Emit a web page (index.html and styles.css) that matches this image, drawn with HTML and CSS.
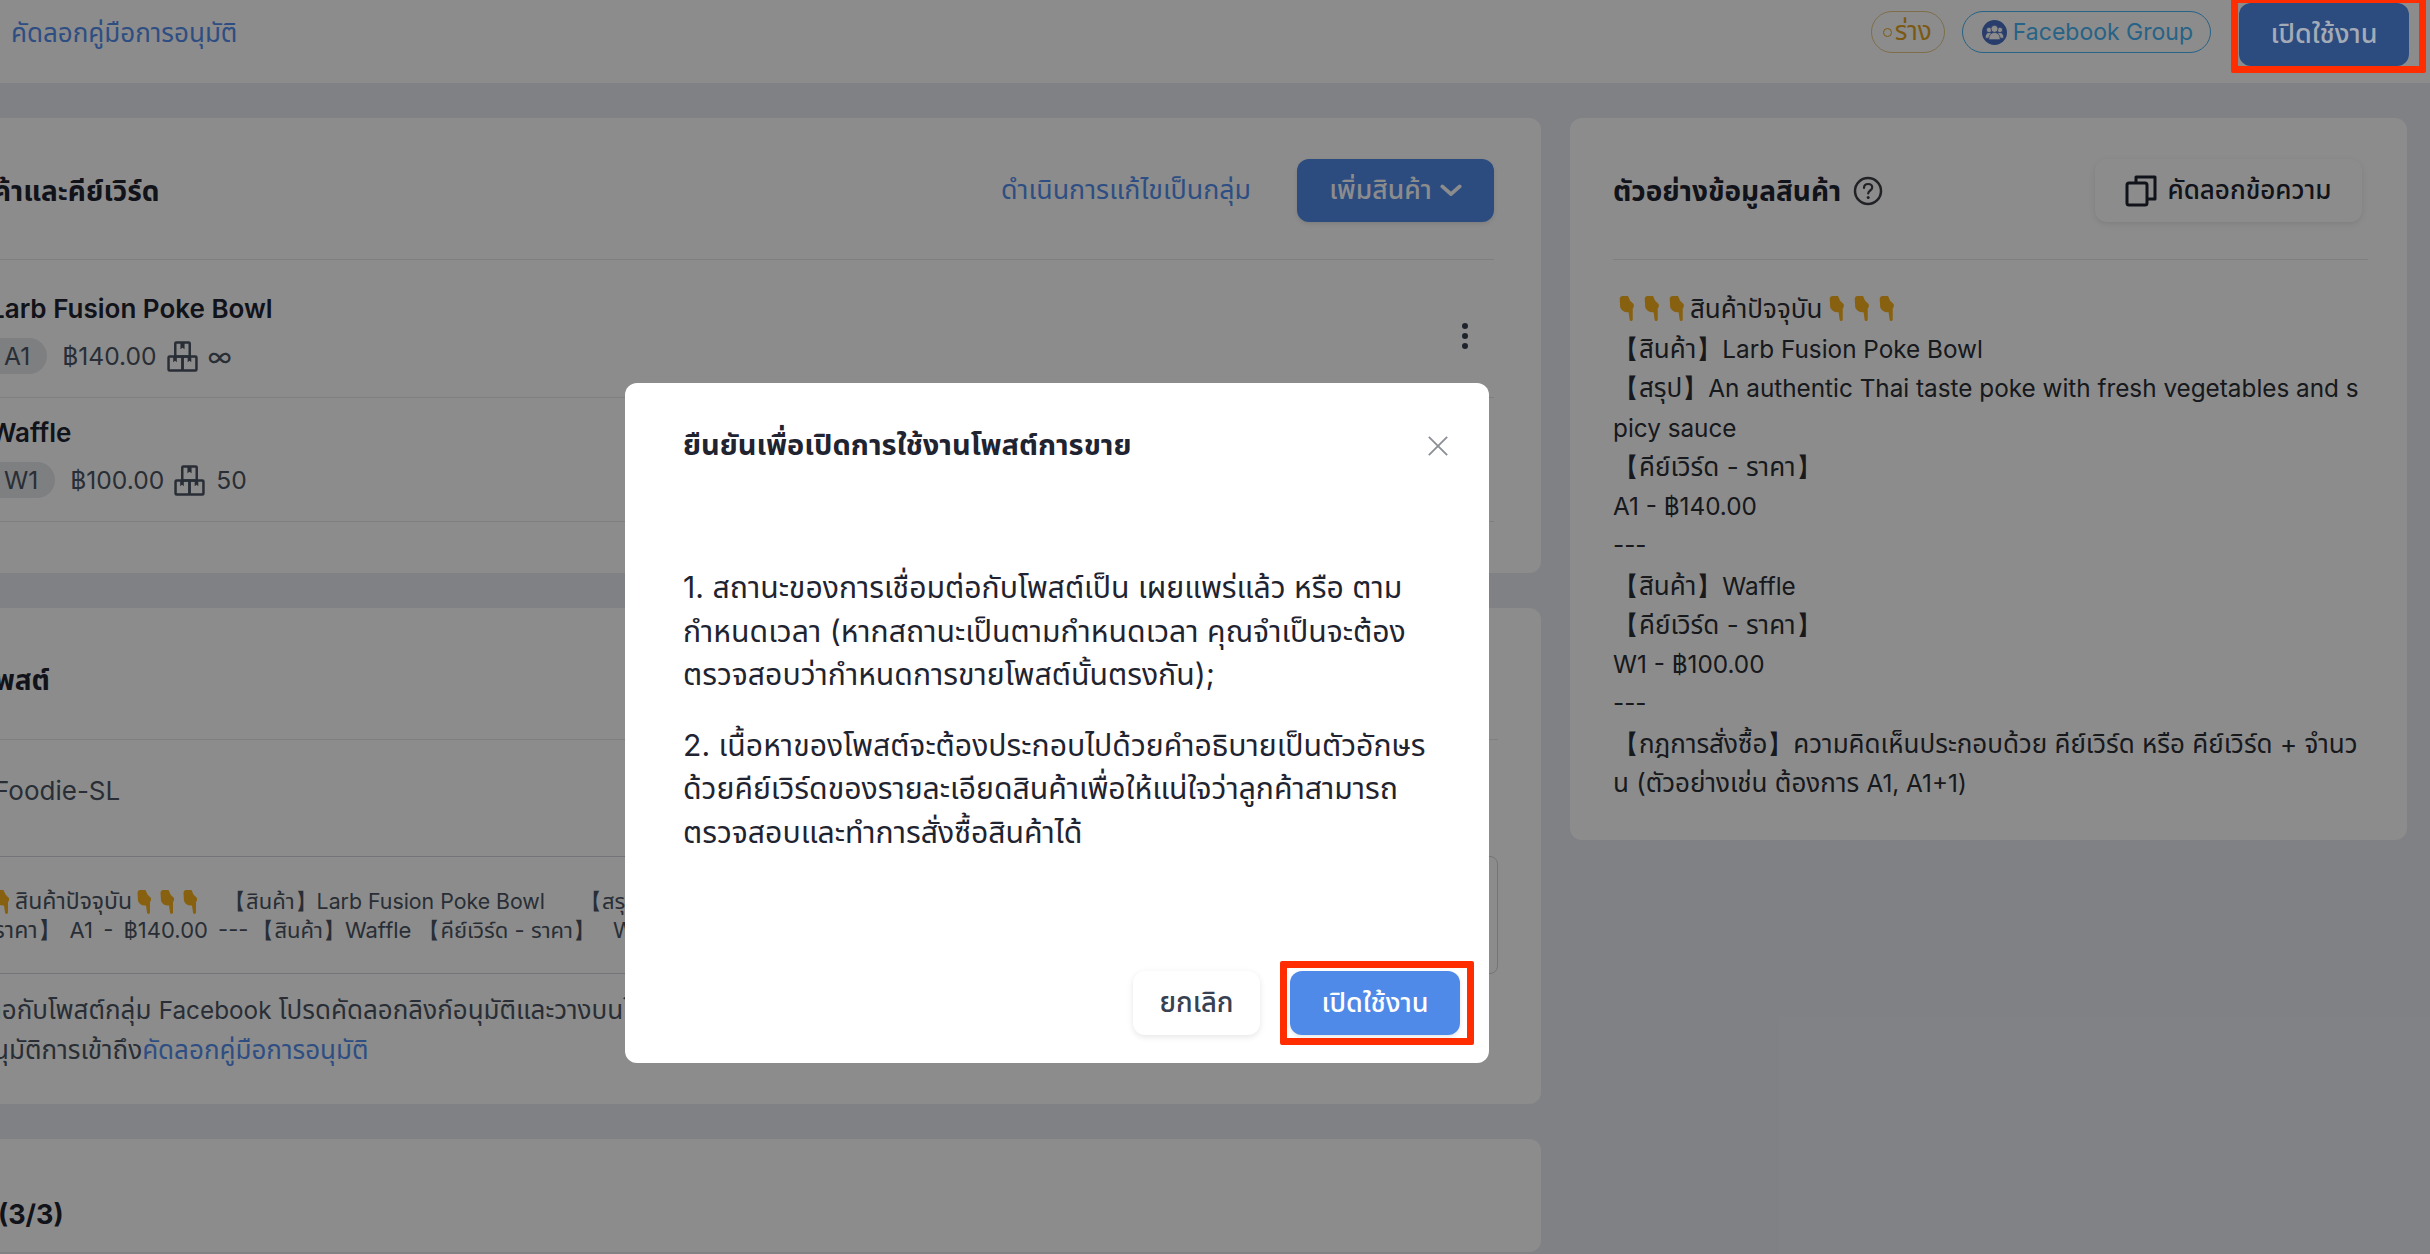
FILE: index.html
```html
<!DOCTYPE html>
<html lang="th">
<head>
<meta charset="utf-8">
<title>Post</title>
<link rel="stylesheet" href="styles.css">
</head>
<body>
<svg class="defs" width="0" height="0" aria-hidden="true"><defs>
  <symbol id="hand" viewBox="0 0 16 24"><path d="M1 3c0-1.500 1-3 2.500-3H9l2 4.500 3.500 3.500v2.500L13.500 12v10.500c0 1.900-3 1.900-3 0L9.500 15.500C6 16 3 14.500 1.500 11z" fill="#f6b01e"/></symbol>
  <symbol id="boxes" viewBox="0 0 30 30"><g fill="none" stroke="currentColor" stroke-width="2.400" stroke-linejoin="round"><rect x="8" y="1.500" width="14" height="13.500" rx="1"/><rect x="1.500" y="15" width="13.500" height="13.500" rx="1"/><rect x="15" y="15" width="13.500" height="13.500" rx="1"/></g><path d="M13 2h4v6l-2-1.500L13 8zM6 15h3.500v5.500l-1.700-1.300L6 20.500zM20 15h3.500v5.500l-1.700-1.300L20 20.500z" fill="currentColor"/></symbol>
</defs></svg>

<div class="app">
  <header class="topbar">
    <a class="link guide-top">คัดลอกคู่มือการอนุมัติ</a>
    <div class="top-actions">
      <span class="pill pill-draft"><i class="dot"></i>ร่าง</span>
      <span class="pill pill-fb">
        <svg class="fb-icon" viewBox="0 0 24 24"><circle cx="12" cy="12" r="12" fill="#4a6fc4"/><g fill="#fff" stroke="#4a6fc4" stroke-width=".8"><circle cx="6.800" cy="9.500" r="2.600"/><circle cx="17.200" cy="9.500" r="2.600"/><path d="M3 17.500c0-3.500 1.500-5.500 3.800-5.500s3.800 2 3.800 5.500zM13.400 17.500c0-3.500 1.500-5.500 3.800-5.500s3.800 2 3.800 5.500z"/><circle cx="12" cy="8.500" r="3.400"/><path d="M6.500 19c0-4.500 2.200-7 5.500-7s5.500 2.500 5.500 7z"/></g></svg>
        Facebook Group
      </span>
      <div class="annot annot-top"><button class="btn btn-top">เปิดใช้งาน</button></div>
    </div>
  </header>

  <main class="content">
    <div class="col-left">
      <section class="card card-products">
        <div class="card-head">
          <h2 class="title title-products">สินค้าและคีย์เวิร์ด</h2>
          <div class="head-actions">
            <a class="link link-bulk">ดำเนินการแก้ไขเป็นกลุ่ม</a>
            <button class="btn btn-primary btn-add">เพิ่มสินค้า
              <svg class="chev" viewBox="0 0 24 14"><path d="M2.500 2.500 12 11l9.500-8.500" fill="none" stroke="currentColor" stroke-width="4" stroke-linecap="round" stroke-linejoin="round"/></svg>
            </button>
          </div>
        </div>
        <div class="product product-first">
          <div class="product-name">Larb Fusion Poke Bowl</div>
          <div class="product-sub">
            <span class="chip">A1</span><span>฿140.00</span>
            <svg class="box"><use href="#boxes"/></svg>
            <span class="inf">∞</span>
          </div>
          <svg class="more" viewBox="0 0 8 28"><circle cx="4" cy="4" r="3"/><circle cx="4" cy="14" r="3"/><circle cx="4" cy="24" r="3"/></svg>
        </div>
        <div class="product">
          <div class="product-name">Waffle</div>
          <div class="product-sub">
            <span class="chip">W1</span><span>฿100.00</span>
            <svg class="box"><use href="#boxes"/></svg>
            <span>50</span>
          </div>
        </div>
      </section>

      <section class="card card-post">
        <div class="card-head head-post">
          <h2 class="title title-post">โพสต์</h2>
        </div>
        <div class="post-page">Foodie-SL</div>
        <div class="post-text">
          <div class="post-line line-1"><span class="hands"><svg class="hand"><use href="#hand"/></svg><svg class="hand"><use href="#hand"/></svg></span><span class="th-run">สินค้าปัจจุบัน</span><span class="hands hands-after"><svg class="hand"><use href="#hand"/></svg><svg class="hand"><use href="#hand"/></svg><svg class="hand"><use href="#hand"/></svg></span><span class="run-1">【สินค้า】<span class="run-latin">Larb Fusion Poke Bowl</span></span><span class="run-2">【สรุป】An authentic Thai taste poke</span></div>
          <div class="post-line line-2"><span class="th-run">【คีย์เวิร์ด - ราคา】</span><span class="run-price">A1 - ฿140.00 ---</span><span class="run-3">【สินค้า】Waffle</span><span class="run-4">【คีย์เวิร์ด - ราคา】</span><span class="run-5">W1 - ฿100.00</span></div>
        </div>
        <p class="post-note note-1">หากต้องการเชื่อมต่อกับโพสต์กลุ่ม <span class="en">Facebook</span> โปรดคัดลอกลิงก์อนุมัติและวางบนโพสต์</p>
        <p class="post-note note-2">เพื่ออนุมัติการเข้าถึง<a class="link">คัดลอกคู่มือการอนุมัติ</a></p>
      </section>

      <section class="card card-third">
        <h2 class="title title-third">(3/3)</h2>
      </section>
    </div>

    <aside class="card card-sample">
      <div class="card-head">
        <div class="sample-title">
          <h2 class="title">ตัวอย่างข้อมูลสินค้า</h2>
          <svg class="help" viewBox="0 0 30 30"><circle cx="15" cy="15" r="13" fill="none" stroke="currentColor" stroke-width="2.500"/><path d="M11 12c0-2.500 1.800-4 4.200-4s4 1.500 4 3.500c0 3-4 3-4 6" fill="none" stroke="currentColor" stroke-width="2.200" stroke-linecap="round"/><circle cx="15.200" cy="21.500" r="1.500" fill="currentColor"/></svg>
        </div>
        <button class="btn btn-white btn-copy">
          <svg class="copy" viewBox="0 0 32 32"><g fill="none" stroke="currentColor" stroke-width="3" stroke-linejoin="round"><path d="M11 8V2h19v22h-8"/><rect x="2" y="8" width="20" height="22" rx="2"/></g></svg>
          คัดลอกข้อความ
        </button>
      </div>
      <div class="sample-body">
        <div class="hands-row"><span class="hands"><svg class="hand"><use href="#hand"/></svg><svg class="hand"><use href="#hand"/></svg><svg class="hand"><use href="#hand"/></svg></span>สินค้าปัจจุบัน<span class="hands hands-end"><svg class="hand"><use href="#hand"/></svg><svg class="hand"><use href="#hand"/></svg><svg class="hand"><use href="#hand"/></svg></span></div>
        <div>【สินค้า】<span class="en">Larb Fusion Poke Bowl</span></div>
        <div>【สรุป】<span class="en">An authentic Thai taste poke with fresh vegetables and spicy sauce</span></div>
        <div>【คีย์เวิร์ด - ราคา】</div>
        <div class="en">A1 - ฿140.00</div>
        <div class="en">---</div>
        <div>【สินค้า】<span class="en">Waffle</span></div>
        <div>【คีย์เวิร์ด - ราคา】</div>
        <div class="en">W1 - ฿100.00</div>
        <div class="en">---</div>
        <div>【กฎการสั่งซื้อ】ความคิดเห็นประกอบด้วย คีย์เวิร์ด หรือ คีย์เวิร์ด + จำนวน (ตัวอย่างเช่น ต้องการ <span class="en">A1, A1+1)</span></div>
      </div>
    </aside>
  </main>
</div>

<div class="overlay">
  <div class="modal">
    <div class="modal-head">
      <h3 class="modal-title">ยืนยันเพื่อเปิดการใช้งานโพสต์การขาย</h3>
      <svg class="close" viewBox="0 0 24 24"><path d="M2 2l20 20M22 2 2 22" fill="none" stroke="#8b8f96" stroke-width="2"/></svg>
    </div>
    <div class="modal-body">
      <p>1. สถานะของการเชื่อมต่อกับโพสต์เป็น เผยแพร่แล้ว หรือ ตาม<br>กำหนดเวลา (หากสถานะเป็นตามกำหนดเวลา คุณจำเป็นจะต้อง<br>ตรวจสอบว่ากำหนดการขายโพสต์นั้นตรงกัน);</p>
      <p>2. เนื้อหาของโพสต์จะต้องประกอบไปด้วยคำอธิบายเป็นตัวอักษร<br>ด้วยคีย์เวิร์ดของรายละเอียดสินค้าเพื่อให้แน่ใจว่าลูกค้าสามารถ<br>ตรวจสอบและทำการสั่งซื้อสินค้าได้</p>
    </div>
    <div class="modal-foot">
      <button class="btn btn-white btn-cancel">ยกเลิก</button>
      <div class="annot annot-modal"><button class="btn btn-primary btn-ok">เปิดใช้งาน</button></div>
    </div>
  </div>
</div>
</body>
</html>
```

FILE: styles.css
```css
* { box-sizing: border-box; }
html, body { margin: 0; height: 100%; overflow: hidden; }
body {
  width: 2430px;
  height: 1254px;
  background: #e9ecf2;
  color: #1f2430;
  font-family: Inter, "Noto Sans", "Noto Sans Thai", "Liberation Sans", sans-serif;
  font-size: 24px;
  position: relative;
}
.defs { position: absolute; }
h2, h3, p { margin: 0; }
.link { color: #558fef; }
.en { font-size: 24.300px; }

.topbar {
  height: 83px;
  background: #fff;
  display: flex;
  align-items: center;
  justify-content: space-between;
  padding: 0 4px 0 11px;
}
.guide-top { font-size: 26px; position: relative; top: -8px; }
.top-actions { display: flex; align-items: flex-start; align-self: flex-start; }
.pill {
  height: 42px;
  border-radius: 21px;
  margin-top: 11px;
  display: inline-flex;
  align-items: center;
  border: 1px solid;
}
.pill-draft { color: #e2a322; border-color: #e8c88a; padding: 0 12px 0 11px; margin-right: 17px; gap: 3px; font-size: 26px; }
.dot { width: 9px; height: 9px; border: 1px solid #e2a322; border-radius: 50%; }
.pill-fb { color: #46b4f5; border-color: #46b4f5; padding: 0 17px 0 19px; gap: 6px; margin-right: 20px; font-size: 23px; }
.fb-icon { width: 25px; height: 25px; }

.annot { border: 7px solid #ff2d00; border-radius: 2px; display: flex; }
.annot-top {
  margin-top: -4px;
  height: 77px;
  padding: 0 10px 0 1px;
  position: relative;
  z-index: 2;
  background: #8c8c8c;
}
.annot-modal { padding: 3px 7px 3px 3px; }

.btn {
  border: 0;
  font: inherit;
  font-weight: 500;
  border-radius: 12px;
  display: inline-flex;
  align-items: center;
  justify-content: center;
  cursor: pointer;
}
.btn-primary { background: #508ae9; color: #fff; box-shadow: 0 2px 4px rgba(0,0,0,.1); }
.btn-white { background: #fff; color: #374151; box-shadow: 0 2px 6px rgba(0,0,0,.1); }
.btn-top { width: 170px; height: 63px; font-size: 27px; background: #2c4c80; color: #a5abb6; }
.btn-add { width: 197px; height: 63px; gap: 8px; font-size: 26.500px; }
.chev { width: 22px; height: 13px; }
.btn-copy { width: 267px; height: 63px; gap: 10px; color: #1f2430; font-size: 26px; }
.copy { width: 32px; height: 32px; }

.content {
  display: flex;
  align-items: flex-start;
  margin-left: -48px;
  margin-top: 35px;
  gap: 29px;
}
.col-left { width: 1589px; flex: none; display: flex; flex-direction: column; gap: 35px; }
.card { background: #fff; border-radius: 12px; padding: 0 43px; }
.card-head {
  height: 142px;
  padding-top: 4px;
  border-bottom: 1px solid #e5e7eb;
  display: flex;
  align-items: center;
  justify-content: space-between;
}
.title { font-size: 28px; font-weight: 700; color: #1f2430; padding-top: 3px; }
.title-products { margin-left: -37px; }
.head-actions { display: flex; align-items: center; gap: 46px; }
.link-bulk { font-size: 26.800px; }
.card-products { height: 455px; padding-right: 47px; }

.product {
  height: 124px;
  border-bottom: 1px solid #e5e7eb;
  padding-top: 17px;
  position: relative;
}
.product-first { height: 138px; padding-top: 31px; }
.product-name { font-size: 26px; font-weight: 600; line-height: 36px; margin-left: -5px; }
.product-sub { display: flex; align-items: center; gap: 15px; color: #4b5563; margin-top: 11px; height: 36px; font-size: 24.600px; }
.chip { height: 36px; border-radius: 18px; background: #e5e7eb; padding: 0 17px 0 30px; margin-left: -21px; display: inline-flex; align-items: center; }
.box { width: 31px; height: 31px; margin: 0 -4px 0 -5px; color: #4b5563; }
.inf { font-size: 26px; margin-left: -1px; }
.more { position: absolute; right: 25px; top: 62px; width: 8px; height: 28px; fill: #374151; }

.card-post { height: 496px; padding-right: 43px; }
.head-post { height: 132px; padding-top: 13px; justify-content: flex-start; }
.title-post { margin-left: -10px; }
.post-page { height: 116px; display: flex; align-items: center; color: #4b5563; padding-bottom: 15px; font-size: 26px; margin-left: -1px; }
.post-text {
  height: 118px;
  border: 1px solid #d1d5db;
  border-radius: 8px;
  margin: 0 0 0 -40px;
  padding-top: 30px;
  overflow: hidden;
  color: #4b5563;
  font-size: 22px;
  line-height: 29px;
}
.post-line { white-space: nowrap; display: flex; align-items: center; }
.line-1 { margin-left: 15px; }
.line-2 { margin-left: -80px; }
.hands { display: inline-flex; gap: 6px; margin-right: 4px; flex: none; }
.hands-after { margin-left: 4px; margin-right: 0; }
.hand { width: 17px; height: 24px; flex: none; }
.th-run { font-size: 23px; }
.run-1 { margin-left: 25px; }
.run-latin { font-size: 21.300px; }
.run-2 { margin-left: 35px; }
.run-price { margin-left: 9px; word-spacing: 4px; }
.run-3 { margin-left: 4px; }
.run-4 { margin-left: 7px; }
.run-5 { margin-left: 18px; }
.post-note { white-space: nowrap; color: #4b5563; font-size: 26px; line-height: 40px; }
.note-1 { margin: 16px 0 0 -188px; }
.note-2 { margin-left: -57px; }

.card-third { height: 113px; padding-top: 56px; }
.title-third { font-size: 27px; margin-left: 3px; }

.card-sample { width: 837px; height: 722px; flex: none; padding: 0 39px 0 43px; }
.card-sample .card-head { padding-right: 6px; }
.sample-title { display: flex; align-items: center; gap: 12px; }
.help { width: 30px; height: 30px; color: #3b3f46; }
.sample-body {
  margin-top: 29px;
  line-height: 39.500px;
  color: #2a2e36;
  word-break: break-all;
  font-size: 26px;
  height: 520px;
}
.sample-body span.en { line-height: 1; }
.hands-row { display: flex; align-items: center; padding-left: 5px; }
.hands-end { margin-left: 6px; margin-right: 0; }
.sample-body .hand { width: 18px; height: 25px; }
.sample-body .hands { gap: 7px; }

.overlay { position: absolute; inset: 0; background: rgba(0,0,0,.45); padding: 383px 0 0 625px; }
.modal {
  width: 864px;
  height: 680px;
  background: #fff;
  border-radius: 12px;
  padding: 41px 29px 0 58px;
  display: flex;
  flex-direction: column;
}
.modal-head { display: flex; justify-content: space-between; align-items: center; height: 44px; padding-right: 1px; }
.modal-title { font-size: 29px; font-weight: 700; color: #1f2430; }
.close { width: 22px; height: 22px; margin-right: 10px; }
.modal-body { flex: 1; margin-top: 98px; font-size: 30.200px; line-height: 43.500px; color: #1f2430; white-space: nowrap; }
.modal-body p + p { margin-top: 27px; }
.modal-foot { display: flex; align-items: center; justify-content: flex-end; gap: 20px; padding-bottom: 18px; margin-right: -14px; }
.btn-cancel { width: 127px; height: 64px; font-size: 27.500px; }
.btn-ok { width: 170px; height: 64px; font-size: 27px; }
```
